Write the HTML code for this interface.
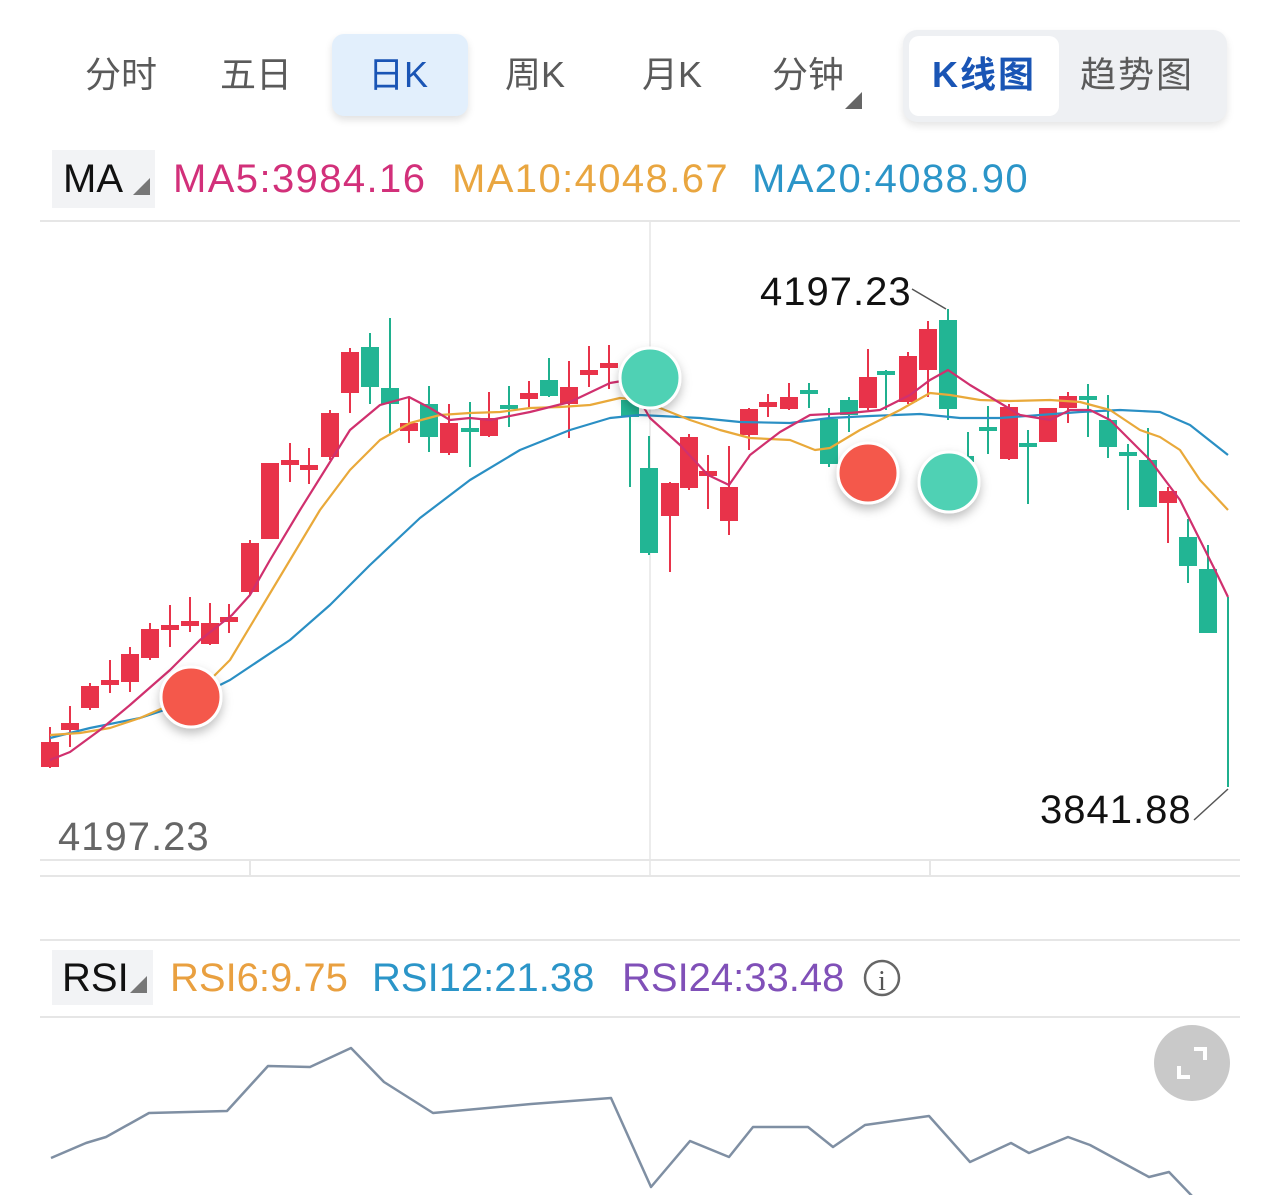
<!DOCTYPE html>
<html><head><meta charset="utf-8"><style>
*{margin:0;padding:0;box-sizing:border-box}
body{width:1280px;height:1195px;background:#fff;position:relative;overflow:hidden;font-family:"Liberation Sans","Noto Sans CJK SC",sans-serif}
.a{position:absolute;white-space:nowrap}
.tab{font-size:36px;color:#5a5a5a;top:52px;line-height:46px}
.ma{font-size:40px;letter-spacing:1.4px;top:157px}
</style></head><body>
<div class="a" style="left:332px;top:34px;width:136px;height:82px;background:#e2effc;border-radius:12px;box-shadow:0 4px 8px rgba(0,0,0,.12)"></div>
<div class="a tab" style="left:85px">分时</div>
<div class="a tab" style="left:220px">五日</div>
<div class="a tab" style="left:368px;color:#1a55b5">日K</div>
<div class="a tab" style="left:505px">周K</div>
<div class="a tab" style="left:642px">月K</div>
<div class="a tab" style="left:772px">分钟</div>
<div class="a" style="left:845px;top:92px;width:0;height:0;border-left:17px solid transparent;border-bottom:17px solid #666"></div>
<div class="a" style="left:903px;top:30px;width:324px;height:92px;background:#eef0f3;border-radius:14px;box-shadow:0 4px 8px rgba(0,0,0,.1)"></div>
<div class="a" style="left:909px;top:36px;width:150px;height:80px;background:#fff;border-radius:10px"></div>
<div class="a tab" style="left:932px;color:#1a55b5;font-weight:bold;letter-spacing:2px">K线图</div>
<div class="a tab" style="left:1080px;letter-spacing:2px">趋势图</div>

<div class="a" style="left:52px;top:150px;width:103px;height:58px;background:#f2f3f5"></div>
<div class="a" style="left:63px;top:157px;font-size:40px;color:#111">MA</div>
<div class="a" style="left:133px;top:178px;width:0;height:0;border-left:17px solid transparent;border-bottom:17px solid #777"></div>
<div class="a ma" style="left:173px;color:#d2307a">MA5:3984.16</div>
<div class="a ma" style="left:452px;color:#e9a640">MA10:4048.67</div>
<div class="a ma" style="left:752px;color:#2b95c8">MA20:4088.90</div>

<div class="a" style="left:52px;top:950px;width:101px;height:55px;background:#f2f3f5"></div>
<div class="a" style="left:62px;top:956px;font-size:40px;color:#111">RSI</div>
<div class="a" style="left:130px;top:976px;width:0;height:0;border-left:17px solid transparent;border-bottom:17px solid #777"></div>
<div class="a" style="left:170px;top:956px;font-size:40px;color:#e9a040">RSI6:9.75</div>
<div class="a" style="left:372px;top:956px;font-size:40px;color:#2b95c8">RSI12:21.38</div>
<div class="a" style="left:622px;top:956px;font-size:40px;color:#8050b8">RSI24:33.48</div>

<svg class="a" style="left:0;top:0" width="1280" height="1195" viewBox="0 0 1280 1195">
<defs><filter id="sh" x="-50%" y="-50%" width="200%" height="200%"><feDropShadow dx="0" dy="5" stdDeviation="5" flood-opacity=".25"/></filter></defs>
<g stroke="#e6e6e6" stroke-width="2">
<line x1="40" y1="221" x2="1240" y2="221"/><line x1="40" y1="860" x2="1240" y2="860"/><line x1="40" y1="876" x2="1240" y2="876"/>
<line x1="40" y1="940" x2="1240" y2="940"/><line x1="40" y1="1017" x2="1240" y2="1017"/>
<line x1="650" y1="221" x2="650" y2="876" stroke-width="1.5"/><line x1="250" y1="860" x2="250" y2="876"/><line x1="930" y1="860" x2="930" y2="876"/>
</g>
<g stroke-width="2">
<g stroke="#e8334a" fill="#e8334a">
<line x1="50" y1="727" x2="50" y2="768"/><rect x="41" y="742" width="18" height="25" stroke="none"/>
<line x1="70" y1="706" x2="70" y2="747"/><rect x="61" y="723" width="18" height="7" stroke="none"/>
<line x1="90" y1="683" x2="90" y2="710"/><rect x="81" y="686" width="18" height="22" stroke="none"/>
<line x1="110" y1="660" x2="110" y2="693"/><rect x="101" y="680" width="18" height="5" stroke="none"/>
<line x1="130" y1="647" x2="130" y2="692"/><rect x="121" y="654" width="18" height="28" stroke="none"/>
<line x1="150" y1="623" x2="150" y2="660"/><rect x="141" y="629" width="18" height="29" stroke="none"/>
<line x1="170" y1="605" x2="170" y2="647"/><rect x="161" y="625" width="18" height="5" stroke="none"/>
<line x1="190" y1="597" x2="190" y2="632"/><rect x="181" y="621" width="18" height="5" stroke="none"/>
<line x1="210" y1="603" x2="210" y2="645"/><rect x="201" y="623" width="18" height="21" stroke="none"/>
<line x1="229" y1="604" x2="229" y2="633"/><rect x="220" y="617" width="18" height="5" stroke="none"/>
<line x1="250" y1="540" x2="250" y2="595"/><rect x="241" y="543" width="18" height="49" stroke="none"/>
<rect x="261" y="463" width="18" height="76" stroke="none"/>
<line x1="290" y1="443" x2="290" y2="482"/><rect x="281" y="460" width="18" height="5" stroke="none"/>
<line x1="309" y1="448" x2="309" y2="484"/><rect x="300" y="465" width="18" height="5" stroke="none"/>
<line x1="330" y1="410" x2="330" y2="460"/><rect x="321" y="413" width="18" height="44" stroke="none"/>
<line x1="350" y1="348" x2="350" y2="413"/><rect x="341" y="352" width="18" height="41" stroke="none"/>
<line x1="409" y1="397" x2="409" y2="443"/><rect x="400" y="423" width="18" height="8" stroke="none"/>
<line x1="449" y1="404" x2="449" y2="455"/><rect x="440" y="423" width="18" height="30" stroke="none"/>
<line x1="489" y1="392" x2="489" y2="437"/><rect x="480" y="418" width="18" height="18" stroke="none"/>
<line x1="529" y1="381" x2="529" y2="407"/><rect x="520" y="393" width="18" height="6" stroke="none"/>
<line x1="569" y1="361" x2="569" y2="438"/><rect x="560" y="387" width="18" height="17" stroke="none"/>
<line x1="589" y1="346" x2="589" y2="387"/><rect x="580" y="370" width="18" height="5" stroke="none"/>
<line x1="609" y1="345" x2="609" y2="389"/><rect x="600" y="363" width="18" height="5" stroke="none"/>
<line x1="670" y1="482" x2="670" y2="572"/><rect x="661" y="483" width="18" height="33" stroke="none"/>
<line x1="689" y1="434" x2="689" y2="490"/><rect x="680" y="437" width="18" height="51" stroke="none"/>
<line x1="708" y1="455" x2="708" y2="509"/><rect x="699" y="471" width="18" height="5" stroke="none"/>
<line x1="729" y1="446" x2="729" y2="535"/><rect x="720" y="487" width="18" height="34" stroke="none"/>
<line x1="749" y1="408" x2="749" y2="450"/><rect x="740" y="409" width="18" height="26" stroke="none"/>
<line x1="768" y1="394" x2="768" y2="417"/><rect x="759" y="402" width="18" height="5" stroke="none"/>
<line x1="789" y1="383" x2="789" y2="410"/><rect x="780" y="397" width="18" height="12" stroke="none"/>
<line x1="868" y1="349" x2="868" y2="410"/><rect x="859" y="377" width="18" height="31" stroke="none"/>
<line x1="908" y1="352" x2="908" y2="404"/><rect x="899" y="356" width="18" height="46" stroke="none"/>
<line x1="928" y1="321" x2="928" y2="397"/><rect x="919" y="329" width="18" height="41" stroke="none"/>
<line x1="1009" y1="404" x2="1009" y2="460"/><rect x="1000" y="407" width="18" height="52" stroke="none"/>
<rect x="1039" y="408" width="18" height="34" stroke="none"/>
<line x1="1068" y1="392" x2="1068" y2="423"/><rect x="1059" y="396" width="18" height="12" stroke="none"/>
<line x1="1168" y1="487" x2="1168" y2="543"/><rect x="1159" y="491" width="18" height="12" stroke="none"/>
</g>
<g stroke="#1fb08e" fill="#22b594">
<line x1="370" y1="333" x2="370" y2="404"/><rect x="361" y="347" width="18" height="40" stroke="none"/>
<line x1="390" y1="318" x2="390" y2="435"/><rect x="381" y="388" width="18" height="16" stroke="none"/>
<line x1="429" y1="386" x2="429" y2="452"/><rect x="420" y="404" width="18" height="33" stroke="none"/>
<line x1="470" y1="402" x2="470" y2="467"/><rect x="461" y="428" width="18" height="4" stroke="none"/>
<line x1="509" y1="386" x2="509" y2="427"/><rect x="500" y="405" width="18" height="4" stroke="none"/>
<line x1="549" y1="358" x2="549" y2="397"/><rect x="540" y="380" width="18" height="16" stroke="none"/>
<line x1="630" y1="400" x2="630" y2="487"/><rect x="621" y="400" width="18" height="17" stroke="none"/>
<line x1="649" y1="436" x2="649" y2="555"/><rect x="640" y="468" width="18" height="85" stroke="none"/>
<line x1="809" y1="383" x2="809" y2="408"/><rect x="800" y="390" width="18" height="4" stroke="none"/>
<line x1="829" y1="408" x2="829" y2="467"/><rect x="820" y="419" width="18" height="45" stroke="none"/>
<line x1="849" y1="397" x2="849" y2="432"/><rect x="840" y="400" width="18" height="15" stroke="none"/>
<line x1="886" y1="370" x2="886" y2="410"/><rect x="877" y="371" width="18" height="4" stroke="none"/>
<line x1="948" y1="309" x2="948" y2="420"/><rect x="939" y="320" width="18" height="89" stroke="none"/>
<line x1="968" y1="432" x2="968" y2="462"/><rect x="964" y="456" width="10" height="6" stroke="none"/>
<line x1="988" y1="406" x2="988" y2="454"/><rect x="979" y="427" width="18" height="4" stroke="none"/>
<line x1="1028" y1="430" x2="1028" y2="504"/><rect x="1019" y="443" width="18" height="4" stroke="none"/>
<line x1="1088" y1="384" x2="1088" y2="437"/><rect x="1079" y="396" width="18" height="4" stroke="none"/>
<line x1="1108" y1="395" x2="1108" y2="458"/><rect x="1099" y="420" width="18" height="27" stroke="none"/>
<line x1="1128" y1="444" x2="1128" y2="510"/><rect x="1119" y="452" width="18" height="4" stroke="none"/>
<line x1="1148" y1="428" x2="1148" y2="507"/><rect x="1139" y="460" width="18" height="47" stroke="none"/>
<line x1="1188" y1="519" x2="1188" y2="583"/><rect x="1179" y="537" width="18" height="29" stroke="none"/>
<line x1="1208" y1="545" x2="1208" y2="633"/><rect x="1199" y="569" width="18" height="64" stroke="none"/>
<line x1="1228" y1="597" x2="1228" y2="787"/>
</g>
</g>
<g fill="none" stroke-width="2.2" stroke-linejoin="round">
<polyline stroke="#2a8fc4" points="50,738 90,728 140,718 180,705 230,680 290,640 330,605 370,565 420,518 470,480 520,450 570,430 610,418 640,415 700,418 740,422 790,423 830,418 870,416 920,414 960,418 1000,418 1040,415 1080,412 1120,410 1160,412 1190,425 1228,455"/>
<polyline stroke="#e9a93a" points="50,735 80,733 110,728 140,718 170,705 200,690 230,660 260,610 290,560 320,510 350,470 380,440 410,423 440,415 470,413 500,412 530,408 560,407 590,405 620,398 640,400 690,420 720,430 750,438 790,440 815,450 830,448 860,430 900,410 930,393 950,395 980,400 1010,401 1050,400 1080,402 1110,410 1140,430 1160,437 1180,450 1200,480 1228,510"/>
<polyline stroke="#d0306e" points="50,760 70,752 100,730 130,705 170,670 200,640 232,615 250,595 270,560 300,510 330,462 350,430 380,405 409,397 430,408 450,420 470,418 490,420 530,412 570,402 610,383 628,380 650,418 680,445 708,475 729,485 750,455 780,432 810,415 850,413 880,410 910,395 930,380 948,370 970,385 1000,403 1020,415 1050,420 1070,410 1090,410 1110,420 1130,440 1150,460 1180,500 1200,540 1215,570 1228,597"/>
</g>
<g filter="url(#sh)" stroke="#fff" stroke-width="3">
<circle cx="191" cy="697" r="30" fill="#f4594b"/>
<circle cx="650" cy="378" r="30" fill="#4fd1b4"/>
<circle cx="868" cy="473" r="30" fill="#f4594b"/>
<circle cx="949" cy="482" r="30" fill="#4fd1b4"/>
</g>
<g stroke="#555" stroke-width="1.5"><line x1="912" y1="289" x2="946" y2="309"/><line x1="1194" y1="820" x2="1228" y2="789"/></g>
<text x="760" y="305" font-size="40" fill="#111" letter-spacing="1" font-family="Liberation Sans">4197.23</text>
<text x="1040" y="823" font-size="40" fill="#111" letter-spacing="1" font-family="Liberation Sans">3841.88</text>
<text x="58" y="850" font-size="40" fill="#666" letter-spacing="1" font-family="Liberation Sans">4197.23</text>
<circle cx="882" cy="978" r="17" fill="none" stroke="#666" stroke-width="2.5"/>
<text x="882" y="990" font-size="28" fill="#555" text-anchor="middle" font-family="Liberation Serif">i</text>
<circle cx="1192" cy="1063" r="38" fill="#c9c9c9"/>
<path d="M1179 1066v11h11M1205 1060v-11h-11" fill="none" stroke="#fff" stroke-width="4"/>
<polyline fill="none" stroke="#7f8fa3" stroke-width="2.5" stroke-linejoin="round" points="51,1158 86,1143 106,1137 149,1113 227,1111 268,1066 310,1067 351,1048 384,1082 433,1113 531,1104 611,1098 651,1187 690,1141 729,1157 753,1127 808,1127 833,1147 865,1125 929,1116 970,1162 1011,1143 1029,1153 1068,1137 1090,1145 1149,1177 1169,1172 1193,1197"/>
</svg>
</body></html>
